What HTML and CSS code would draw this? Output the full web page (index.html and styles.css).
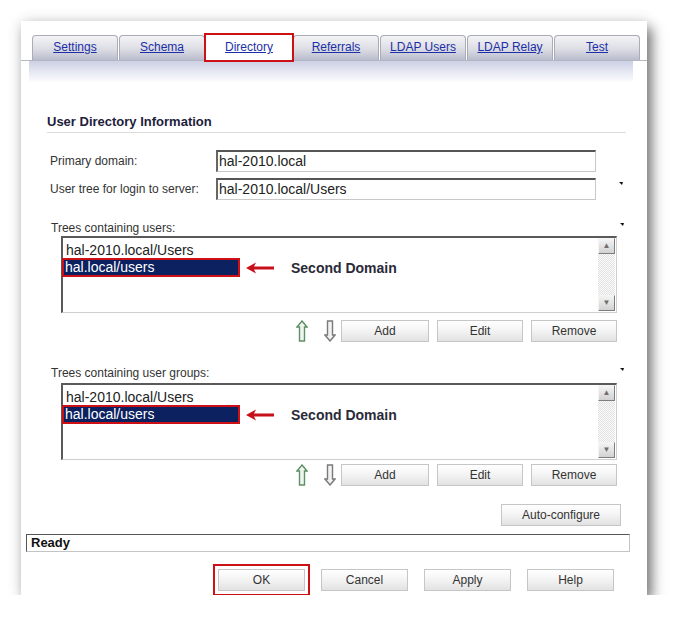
FILE: index.html
```html
<!DOCTYPE html>
<html lang="en">
<head>
    <meta charset="UTF-8">
    <title>User Directory Information</title>
    <link rel="stylesheet" href="styles.css">
</head>
<body>
    <div class="window">
        <div class="tabs">
            <a class="tab" href="#">Settings</a>
            <a class="tab" href="#">Schema</a>
            <a class="tab active" href="#">Directory</a>
            <a class="tab" href="#">Referrals</a>
            <a class="tab" href="#">LDAP Users</a>
            <a class="tab" href="#">LDAP Relay</a>
            <a class="tab" href="#">Test</a>
        </div>
        <div class="band"></div>

        <h2 class="section-title">User Directory Information</h2>

        <div class="form-row">
            <label>Primary domain:</label>
            <div class="field">hal-2010.local</div>
        </div>
        <div class="form-row second">
            <label>User tree for login to server:</label>
            <div class="field">hal-2010.local/Users</div>
            <span class="mark"></span>
        </div>

        <!-- users -->
        <div class="list-label">
            <span>Trees containing users:</span>
            <span class="mark"></span>
        </div>
        <div class="listbox">
            <div class="items">
                <div class="item">hal-2010.local/Users</div>
                <div class="item-row">
                    <div class="item selected">hal.local/users</div>
                    <svg class="pointer" width="28" height="12" viewBox="0 0 28 12">
                        <path d="M0 6 L10 0.5 L8 4.5 H28 V7.5 H8 L10 11.5 Z" fill="#c8101a"/>
                    </svg>
                    <span class="note">Second Domain</span>
                </div>
            </div>
            <div class="scroll">
                <div class="scroll-btn">&#9650;</div>
                <div class="track"></div>
                <div class="scroll-btn">&#9660;</div>
            </div>
        </div>
        <div class="list-actions">
            <svg class="move up" width="12" height="22" viewBox="0 0 12 22">
                <path d="M6 1 L11 7 H8.5 V21 H3.5 V7 H1 Z" fill="#eef5ee" stroke="#5f8f67" stroke-width="1.4"/>
            </svg>
            <svg class="move down" width="12" height="22" viewBox="0 0 12 22">
                <path d="M6 21 L11 15 H8.5 V1 H3.5 V15 H1 Z" fill="#f2f2f2" stroke="#7a7a7a" stroke-width="1.4"/>
            </svg>
            <button class="btn add">Add</button>
            <button class="btn">Edit</button>
            <button class="btn">Remove</button>
        </div>

        <!-- user groups -->
        <div class="list-label groups">
            <span>Trees containing user groups:</span>
            <span class="mark"></span>
        </div>
        <div class="listbox">
            <div class="items">
                <div class="item">hal-2010.local/Users</div>
                <div class="item-row">
                    <div class="item selected">hal.local/users</div>
                    <svg class="pointer" width="28" height="12" viewBox="0 0 28 12">
                        <path d="M0 6 L10 0.5 L8 4.5 H28 V7.5 H8 L10 11.5 Z" fill="#c8101a"/>
                    </svg>
                    <span class="note">Second Domain</span>
                </div>
            </div>
            <div class="scroll">
                <div class="scroll-btn">&#9650;</div>
                <div class="track"></div>
                <div class="scroll-btn">&#9660;</div>
            </div>
        </div>
        <div class="list-actions">
            <svg class="move up" width="12" height="22" viewBox="0 0 12 22">
                <path d="M6 1 L11 7 H8.5 V21 H3.5 V7 H1 Z" fill="#eef5ee" stroke="#5f8f67" stroke-width="1.4"/>
            </svg>
            <svg class="move down" width="12" height="22" viewBox="0 0 12 22">
                <path d="M6 21 L11 15 H8.5 V1 H3.5 V15 H1 Z" fill="#f2f2f2" stroke="#7a7a7a" stroke-width="1.4"/>
            </svg>
            <button class="btn add">Add</button>
            <button class="btn">Edit</button>
            <button class="btn">Remove</button>
        </div>

        <div class="auto-row">
            <button class="btn auto">Auto-configure</button>
        </div>

        <div class="status">Ready</div>

        <div class="footer-buttons">
            <button class="btn ok">OK</button>
            <button class="btn">Cancel</button>
            <button class="btn">Apply</button>
            <button class="btn">Help</button>
        </div>
    </div>
</body>
</html>
```

FILE: styles.css
```css
/* General Styling */
body {
    margin: 0;
    background: #fff;
    font-family: "Liberation Sans", Arial, sans-serif;
    font-size: 12px;
    color: #333;
}

.window {
    margin: 21px 0 0 21px;
    width: 626px;
    height: 574px;
    background: #fff;
    box-shadow: 5px 7px 12px rgba(0, 0, 0, 0.5), 0 0 14px rgba(0, 0, 0, 0.12);
    overflow: hidden;
}

/* Tabs */
.tabs {
    display: flex;
    gap: 1px;
    padding: 14px 0 0 11px;
    border-bottom: 1px solid #b4b6c2;
    height: 25px;
    align-items: flex-end;
}

.tab {
    width: 86px;
    height: 25px;
    box-sizing: border-box;
    border: 1px solid #a9abb5;
    border-bottom: none;
    border-radius: 4px 4px 0 0;
    background: linear-gradient(#f4f4f6, #dcdde4 55%, #b9bccd);
    color: #1c2fa6;
    text-decoration: underline;
    text-align: center;
    line-height: 22px;
    font-size: 12px;
}

.tab.active {
    background: #fff;
    border-radius: 0;
    border-color: #fff;
    outline: 2px solid #cc1016;
    outline-offset: 0;
    position: relative;
    z-index: 1;
}

.band {
    margin: 0 14px 0 8px;
    height: 22px;
    background: linear-gradient(#ccd0e4, #fff);
}

.section-title {
    margin: 31px 21px 0 26px;
    padding-bottom: 2px;
    border-bottom: 1px solid #dcdcdc;
    font-size: 13px;
    line-height: 16px;
    font-weight: bold;
    color: #1d1d3b;
}

/* Form */
.form-row {
    display: flex;
    align-items: center;
    margin: 17px 0 0 29px;
}

.form-row.second {
    margin-top: 6px;
}

.form-row label {
    width: 166px;
    color: #333;
}

.field {
    width: 380px;
    height: 22px;
    box-sizing: border-box;
    border: 1px solid #c8c8c8;
    border-top: 2px solid #555;
    border-left: 2px solid #666;
    font-size: 14px;
    line-height: 18px;
    padding-left: 1px;
    color: #222;
}

.mark {
    width: 0;
    height: 0;
    border-top: 3px solid #111;
    border-left: 3px solid transparent;
    border-right: 1px solid transparent;
    margin-left: 23px;
    margin-top: -12px;
}

.list-label {
    display: flex;
    justify-content: space-between;
    align-items: center;
    width: 573px;
    margin: 20px 0 0 30px;
    line-height: 16px;
}

.list-label .mark {
    margin: -8px 0 0 0;
}

.list-label.groups {
    margin-top: 23px;
}

/* Listbox */
.listbox {
    display: flex;
    width: 556px;
    height: 77px;
    box-sizing: border-box;
    margin: 0 0 0 40px;
    border: 1px solid #cfcfcf;
    border-top: 2px solid #5a5a5a;
    border-left: 2px solid #5a5a5a;
    background: #fff;
}

.list-label.groups + .listbox {
    margin-top: 2px;
}

.items {
    flex: 1;
    padding-top: 4px;
    font-size: 14px;
    color: #222;
}

.item {
    line-height: 16px;
    padding-left: 3px;
}

.item-row {
    display: flex;
    align-items: center;
}

.item.selected {
    width: 173px;
    background: #0c215f;
    color: #fff;
    border: 2px solid #cc1016;
    padding-left: 1px;
    line-height: 15px;
    margin-left: -1px;
}

.pointer {
    margin-left: 6px;
}

.note {
    margin-left: 17px;
    font-size: 14px;
    font-weight: bold;
    color: #2a2a38;
}

.scroll {
    width: 17px;
    display: flex;
    flex-direction: column;
    margin: 0 1px 1px 0;
}

.scroll-btn {
    height: 16px;
    box-sizing: border-box;
    border: 1px solid #7e7e7e;
    border-top-color: #f4f4f4;
    border-left-color: #f4f4f4;
    background: linear-gradient(#f4f4f4, #d2d2d2);
    color: #6e6e6e;
    font-size: 8px;
    line-height: 14px;
    text-align: center;
}

.track {
    flex: 1;
    background: repeating-conic-gradient(#e2e2e2 0 25%, #fafafa 0 50%) 0 0 / 2px 2px;
}

/* Buttons */
.btn {
    height: 22px;
    box-sizing: border-box;
    border: 1px solid #c6c6c6;
    background: linear-gradient(#ffffff, #f3f3f3 50%, #e2e2e2);
    font-family: "Liberation Sans", Arial, sans-serif;
    font-size: 12px;
    color: #333;
    padding: 0;
}

.list-actions {
    display: flex;
    align-items: center;
    gap: 8px;
    margin: 6px 0 0 275px;
}

.list-actions .btn {
    width: 86px;
}

.list-actions .btn.add {
    width: 88px;
}

.move.up {
    margin-right: 8px;
}

.move.down {
    margin-right: -3px;
}

.listbox + .list-actions {
    margin-top: 7px;
}

.list-label.groups + .listbox + .list-actions {
    margin-top: 4px;
}

.auto-row {
    display: flex;
    justify-content: flex-end;
    margin: 18px 26px 0 0;
}

.btn.auto {
    width: 120px;
}

.status {
    margin: 8px 0 0 5px;
    width: 604px;
    height: 18px;
    box-sizing: border-box;
    border: 1px solid #c4c4c4;
    border-top: 1px solid #555;
    border-left: 1px solid #555;
    font-weight: bold;
    font-size: 13px;
    line-height: 16px;
    padding-left: 4px;
    color: #111;
}

.footer-buttons {
    display: flex;
    gap: 16px;
    margin: 17px 0 0 197px;
}

.footer-buttons .btn {
    width: 87px;
}

.btn.ok {
    outline: 2px solid #cc1016;
    outline-offset: 3px;
}
```
